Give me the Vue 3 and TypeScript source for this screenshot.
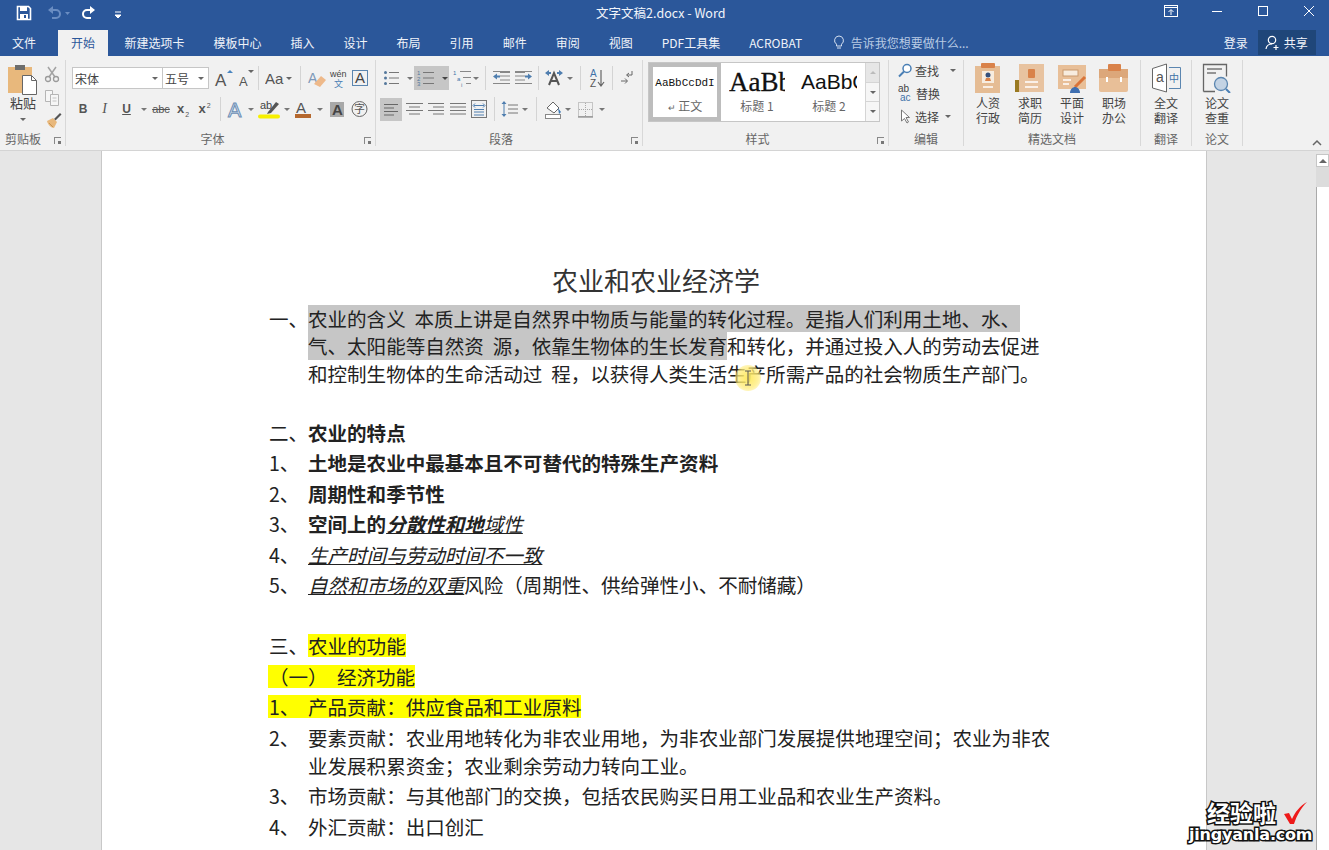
<script setup lang="ts">
interface Seg { t: string; c?: string }
interface Row { m: string; segs: Seg[][]; c?: string }

const tabs = ['新建选项卡', '模板中心', '插入', '设计', '布局', '引用', '邮件', '审阅', '视图', 'PDF工具集', 'ACROBAT']

const rows: Row[] = [
  { m: '一、', c: 'wrap first', segs: [
    [{ t: '农业的含义 本质上讲是自然界中物质与能量的转化过程。是指人们利用土地、水、', c: 'sel' }],
    [{ t: '气、太阳能等自然资 源，依靠生物体的生长发育', c: 'sel' }, { t: '和转化，并通过投入人的劳动去促进' }],
    [{ t: '和控制生物体的生命活动过 程，以获得人类生活生产所需产品的社会物质生产部门。' }],
  ] },
  { m: '二、', c: 'sec-a', segs: [[{ t: '农业的特点', c: 'b sp' }]] },
  { m: '1、', segs: [[{ t: '土地是农业中最基本且不可替代的特殊生产资料', c: 'b' }]] },
  { m: '2、', segs: [[{ t: '周期性和季节性', c: 'b' }]] },
  { m: '3、', segs: [[{ t: '空间上的', c: 'b' }, { t: '分散性和地', c: 'b i' }, { t: '域性', c: 'i' }]] },
  { m: '4、', segs: [[{ t: '生产时间与劳动时间不一致', c: 'i' }]] },
  { m: '5、', segs: [[{ t: '自然和市场的双重', c: 'i' }, { t: '风险（周期性、供给弹性小、不耐储藏）' }]] },
  { m: '三、', c: 'sec-b', segs: [[{ t: '农业的功能', c: 'hl' }]] },
  { m: '（一）', c: 'hl-row sub', segs: [[{ t: '经济功能' }]] },
  { m: '1、', c: 'hl-row', segs: [[{ t: '产品贡献：供应食品和工业原料' }]] },
  { m: '2、', c: 'wrap two', segs: [
    [{ t: '要素贡献：农业用地转化为非农业用地，为非农业部门发展提供地理空间；农业为非农' }],
    [{ t: '业发展积累资金；农业剩余劳动力转向工业。' }],
  ] },
  { m: '3、', c: 'after-two', segs: [[{ t: '市场贡献：与其他部门的交换，包括农民购买日用工业品和农业生产资料。' }]] },
  { m: '4、', c: 'last', segs: [[{ t: '外汇贡献：出口创汇' }]] },
]
</script>

<template>
  <div class="word">
    <header class="titlebar">
      <div class="qat">
        <svg width="16" height="16" class="save"><path d="M1.5 1.5h11l2 2v11h-13z" fill="none" stroke="#fff" stroke-width="1.6"/><rect x="4" y="2" width="7" height="4" fill="#fff"/><rect x="4" y="9" width="8" height="5" fill="#fff"/><rect x="8" y="10" width="2" height="3" fill="#2b579a"/></svg>
        <svg width="26" height="16" class="undo"><path d="M3 5h7a4 4 0 0 1 0 8H6" fill="none" stroke="#6a8dc2" stroke-width="2"/><path d="M7 1L2 5l5 4z" fill="#6a8dc2"/><path d="M19 7h5l-2.500 3z" fill="#6a8dc2"/></svg>
        <svg width="16" height="16" class="redo"><path d="M13 5H6a4 4 0 0 0 0 8h4" fill="none" stroke="#fff" stroke-width="2"/><path d="M9 1l5 4-5 4z" fill="#fff"/></svg>
        <svg width="8" height="8" class="custom"><path d="M1 1h6M1 4h6l-3 3z" stroke="#fff" fill="#fff" stroke-width="1"/></svg>
      </div>
      <div class="doc-name">文字文稿2.docx - Word</div>
      <div class="winbtns">
        <svg width="14" height="13"><rect x=".5" y=".5" width="13" height="11" fill="none" stroke="#fff"/><path d="M1 2.500h12M7 10V5M4.500 7L7 4.500 9.500 7" fill="none" stroke="#fff"/></svg>
        <svg width="12" height="12" class="w-min"><path d="M1 6.500h10" stroke="#fff"/></svg>
        <svg width="12" height="12" class="w-max"><rect x="1.500" y="1.500" width="9" height="9" fill="none" stroke="#fff"/></svg>
        <svg width="12" height="12" class="w-close"><path d="M1 1l10 10M11 1L1 11" stroke="#fff"/></svg>
      </div>
    </header>

    <nav class="tabbar">
      <span class="tab file">文件</span>
      <span class="tab active">开始</span>
      <span v-for="t in tabs" :key="t" class="tab">{{ t }}</span>
      <svg width="12" height="16" class="bulb"><path d="M6 1a4.500 4.500 0 0 0-2.500 8.200V11h5V9.200A4.500 4.500 0 0 0 6 1zM4 13h4" fill="none" stroke="#d5e0f0"/></svg>
      <span class="tell">告诉我您想要做什么...</span>
      <span class="login">登录</span>
      <span class="share">
        <svg width="16" height="17"><circle cx="7" cy="6" r="3.700" fill="none" stroke="#fff" stroke-width="1.200"/><path d="M1 15c.5-3.500 3-5 6-5M11 11v5M8.500 13.500h5" fill="none" stroke="#fff" stroke-width="1.200"/></svg>
        共享
      </span>
    </nav>

    <section class="ribbon">
      <div class="grp g-clip">
        <div class="clip-body">
          <div class="paste">
            <svg width="30" height="32"><rect x="0" y="3" width="24" height="26" fill="#e8b87c"/><rect x="7" y="1" width="10" height="5" fill="#6d6d6d"/><path d="M14.500 11.500h9l5 5v14h-14z" fill="#fff" stroke="#666"/><path d="M23.500 11.500v5h5" fill="none" stroke="#666"/></svg>
            <span class="paste-t">粘贴</span>
            <i class="caret"></i>
          </div>
          <div class="clip-tools">
            <svg width="16" height="17"><path d="M4 1l7 10M12 1L5 11" stroke="#a3a3a3" stroke-width="1.500" fill="none"/><circle cx="4" cy="13" r="2.500" fill="none" stroke="#9a9a9a" stroke-width="1.300"/><circle cx="12" cy="13" r="2.500" fill="none" stroke="#9a9a9a" stroke-width="1.300"/></svg>
            <svg width="16" height="17"><path d="M1.500 1.500h7v11h-7z" fill="#f6f6f6" stroke="#b5b5b5"/><path d="M6.500 5.500h8v11h-8z" fill="#f6f6f6" stroke="#b5b5b5"/><path d="M8.500 9h4M8.500 12h4" stroke="#c2c2c2"/></svg>
            <svg width="18" height="17"><path d="M10 7l6-6 1.500 1.500-6 6z" fill="#555"/><path d="M3 9l6-3 4 4-3 6c-3 0-6-3-7-7z" fill="#e8b87c"/><path d="M5 11l4 4" stroke="#c89454"/></svg>
          </div>
        </div>
        <div class="glabel">剪贴板<i class="launch"></i></div>
      </div>

      <div class="grp g-font">
        <div class="tools">
          <div class="row r1">
            <div class="combo c-font">宋体<i class="caret"></i></div>
            <div class="combo c-size">五号<i class="caret"></i></div>
            <svg width="26" height="24"><text x="5" y="20" class="ti big">A</text><path d="M17 7l3-3 3 3z" fill="#4a86c0"/></svg>
            <svg width="22" height="24"><text x="3" y="20" class="ti mid">A</text><path d="M12 4h6l-3 3z" fill="#666"/></svg>
            <i class="sep"></i>
            <svg width="28" height="24"><text x="0" y="18" class="ti aa">Aa</text><path d="M21 11h6l-3 3z" fill="#666"/></svg>
            <i class="sep s2"></i>
            <svg width="20" height="24"><text x="1" y="17" class="ti eraser">A</text><path d="M7 18l7-8 5 4-6 7z" fill="#eeb98a"/></svg>
            <svg width="23" height="24"><text x="3" y="11" class="ti wen">wén</text><text x="7" y="21" class="ti wz">文</text></svg>
            <svg width="20" height="24"><rect x="2.500" y="4.500" width="15" height="15" fill="none" stroke="#5b86b0"/><text x="5" y="17" class="ti boxa">A</text></svg>
          </div>
          <div class="row">
            <span class="fb fb-b">B</span>
            <span class="fb fb-i">I</span>
            <span class="fb fb-u">U</span>
            <i class="drop d11"></i>
            <span class="fb fb-s">abc</span>
            <span class="fb fb-x">x<sub>2</sub></span>
            <span class="fb fb-xs">x<sup>2</sup></span>
            <i class="sep s3"></i>
            <svg width="20" height="24"><text x="2" y="20" class="ti outline">A</text></svg>
            <i class="drop d10"></i>
            <svg width="26" height="24"><text x="4" y="12" class="ti ab">ab</text><path d="M12 15l8-10 3 2-8 9-4 1z" fill="#555"/><path d="M4 19.500h18" stroke="#f7f000" stroke-width="4" stroke-linecap="round"/></svg>
            <i class="drop d9"></i>
            <svg width="24" height="24"><text x="5" y="16" class="ti tcol">A</text><rect x="4" y="17" width="16" height="4" fill="#b5682e"/></svg>
            <i class="drop d10"></i>
            <svg width="24" height="24"><rect x="5" y="5" width="14" height="15" fill="#a8a8a8"/><text x="7" y="18" class="ti gra">A</text></svg>
            <svg width="21" height="24"><circle cx="10.500" cy="12" r="7.500" fill="none" stroke="#666"/><text x="5" y="16" class="ti zi">字</text></svg>
          </div>
        </div>
        <div class="glabel shifted">字体<i class="launch"></i></div>
      </div>

      <div class="grp g-para">
        <div class="tools">
          <div class="row r1">
            <svg width="26" height="24"><path d="M9 6.500h10M9 12h10M9 17.500h10" stroke="#777"/><circle cx="5.500" cy="6.500" r="1.500" fill="#55789c"/><circle cx="5.500" cy="12" r="1.500" fill="#55789c"/><circle cx="5.500" cy="17.500" r="1.500" fill="#55789c"/></svg>
            <i class="drop d8"></i>
            <div class="on-num">
              <svg width="26" height="24"><path d="M9 6.500h11M9 12h11M9 17.500h11" stroke="#777"/><text x="3" y="9" class="ti n">1</text><text x="3" y="14.500" class="ti n">2</text><text x="3" y="20" class="ti n">3</text></svg>
              <i class="drop d9 dark"></i>
            </div>
            <svg width="29" height="24" class="m2"><path d="M9 5.500h11M12 11.500h8M15 17.500h5" stroke="#888"/><text x="2" y="9" class="ti n b1">1</text><text x="6" y="15" class="ti n b1">a</text><text x="10" y="21" class="ti n">i</text><path d="M22 11h6l-3 3z" fill="#777"/></svg>
            <i class="sep s4"></i>
            <svg width="22" height="24"><path d="M9 6.500h10M9 10h10M9 14h10M2 17.500h17M2 5.500h17" stroke="#888"/><path d="M2 10.500l4-3v2h3v2H6v2z" fill="#4f7eaf"/></svg>
            <svg width="22" height="24"><path d="M2 6.500h10M2 10h10M2 14h10M2 17.500h17M2 5.500h17" stroke="#888"/><path d="M19 10.500l-4-3v2h-3v2h3v2z" fill="#4f7eaf"/></svg>
            <i class="sep s5"></i>
            <svg width="22" height="24"><path d="M6 19l5-12 5 12M8 15h6" fill="none" stroke="#555" stroke-width="2"/><path d="M2 7l4-3v2h2v2H6v2zM20 7l-4-3v2h-2v2h2v2z" fill="#4f7eaf"/></svg>
            <i class="drop d9"></i>
            <i class="sep s6"></i>
            <svg width="20" height="24"><text x="2" y="11" class="ti az b1">A</text><text x="2" y="21" class="ti az">Z</text><path d="M13 4v15M10 16l3 4 3-4" fill="none" stroke="#666" stroke-width="1.200"/></svg>
            <i class="sep s7"></i>
            <svg width="14" height="24"><path d="M12 5v4H7M9 7L6.500 9 9 11M1 15h6M5 12.500L7.500 15 5 17.500" fill="none" stroke="#666"/></svg>
          </div>
          <div class="row">
            <div class="on-align"><svg width="22" height="23"><path d="M4 6.500h14M4 10h10M4 13.500h14M4 17h10" stroke="#666"/></svg></div>
            <svg width="24" height="24"><path d="M4 6.500h17M7 10h11M4 13.500h17M7 17h11" stroke="#777"/></svg>
            <svg width="22" height="24"><path d="M2 6.500h16M7 10h11M2 13.500h16M7 17h11" stroke="#777"/></svg>
            <svg width="20" height="24"><path d="M2 6.500h16M2 10h16M2 13.500h16M2 17h16" stroke="#777"/></svg>
            <svg width="22" height="24"><rect x="3.500" y="3.500" width="15" height="17" fill="none" stroke="#777"/><path d="M6 8.500h10M7 6.500l-2 2 2 2M15 6.500l2 2-2 2M6 12.500h10M6 15h10M6 18h10" fill="none" stroke="#4f7eaf"/></svg>
            <i class="sep s8"></i>
            <svg width="20" height="24"><path d="M8 8h10M8 12h10M8 16h10" stroke="#777"/><path d="M4 5v14" stroke="#4f7eaf"/><path d="M1.500 7L4 4l2.500 3zM1.500 17L4 20l2.500-3z" fill="#4f7eaf"/></svg>
            <i class="drop d9"></i>
            <i class="sep s9"></i>
            <svg width="20" height="24"><path d="M4 11l6-6 6 6-5 5z" fill="#fff" stroke="#666"/><path d="M15 11l3 4-2 2z" fill="#3d78b5"/><rect x="2.500" y="17.500" width="15" height="4" fill="#fff" stroke="#888"/></svg>
            <i class="drop d10"></i>
            <svg width="22" height="24"><rect x="5.500" y="5.500" width="14" height="14" fill="none" stroke="#999" stroke-dasharray="1 1"/><path d="M5 20h15" stroke="#777"/><path d="M12.500 6v13M6 12.500h13" stroke="#aaa" stroke-dasharray="1 1"/></svg>
            <i class="drop d14"></i>
          </div>
        </div>
        <div class="glabel shifted">段落<i class="launch"></i></div>
      </div>

      <div class="grp g-style">
        <div class="gallery">
          <div class="sty s-on"><span class="spv pv1">AaBbCcDdI</span><span class="stl"><span class="ret">↵</span> 正文</span></div>
          <div class="sty s-h1"><span class="spv pv2">AaBb</span><span class="stl">标题 1</span></div>
          <div class="sty s-h2"><span class="spv pv3">AaBbC</span><span class="stl">标题 2</span></div>
          <div class="scr">
            <span class="up"></span>
            <span class="dn"></span>
            <span class="more"></span>
          </div>
        </div>
        <div class="glabel shifted">样式<i class="launch"></i></div>
      </div>

      <div class="grp g-edit">
        <div class="edit-list">
          <div class="eitem">
            <svg width="14" height="15"><circle cx="9" cy="5.500" r="4" fill="#fff" stroke="#4a7fb5" stroke-width="1.500"/><path d="M6 8.500L1 13.500" stroke="#4a7fb5" stroke-width="2"/></svg>
            查找<i class="caret far"></i>
          </div>
          <div class="eitem">
            <svg width="15" height="19"><text x="0" y="8" class="ti abc">ab</text><text x="2" y="17" class="ti abc blue">ac</text></svg>
            替换
          </div>
          <div class="eitem">
            <svg width="14" height="15"><path d="M3.500 1v11l3-2.500 2.500 4.500 1.500-1-2.500-4.500h3.500z" fill="#fff" stroke="#777"/></svg>
            选择<i class="caret"></i>
          </div>
        </div>
        <div class="glabel">编辑</div>
      </div>

      <div class="grp g-pick">
        <div class="cols">
          <div class="bigbtn">
            <svg width="30" height="30"><rect x="2" y="3" width="25" height="27" fill="#e5bc94"/><rect x="8" y="0" width="14" height="5" rx="1" fill="#d9824a"/><rect x="9" y="8" width="12" height="12" fill="#f7ecdf"/><circle cx="15" cy="12" r="2.500" fill="#35507c"/><path d="M12 18h6l-1-3h-4z" fill="#d9824a"/><path d="M10 24h10" stroke="#fff" stroke-width="1.500"/></svg>
            <span>人资<br>行政</span>
          </div>
          <div class="bigbtn">
            <svg width="30" height="30"><rect x="4" y="1" width="25" height="28" fill="#e8c3a0"/><rect x="0" y="17" width="4" height="12" fill="#9a7a22"/><rect x="13" y="6" width="7" height="9" rx="1" fill="#d9824a"/><path d="M10 19h13M10 24h13" stroke="#fff" stroke-width="1.500"/></svg>
            <span>求职<br>简历</span>
          </div>
          <div class="bigbtn">
            <svg width="30" height="30"><rect x="1" y="2" width="28" height="24" fill="#e8bf98"/><rect x="6" y="7" width="15" height="6" fill="#f7ecdf" stroke="#c99a6e"/><path d="M6 17h8M6 21h6" stroke="#fff" stroke-width="1.500"/><path d="M18 24l10-10" stroke="#d9743a" stroke-width="3"/><path d="M13 30c0-4 3-6 5-6s5 2 5 6z" fill="#3f6fb0"/></svg>
            <span>平面<br>设计</span>
          </div>
          <div class="bigbtn">
            <svg width="30" height="30"><rect x="0" y="6" width="29" height="23" rx="2" fill="#e8bf98"/><path d="M0 6h29v9H0z" fill="#dca77a"/><rect x="9" y="1" width="13" height="7" rx="1" fill="#d9824a"/><rect x="7" y="14" width="2" height="5" fill="#fff"/><rect x="21" y="14" width="2" height="5" fill="#fff"/></svg>
            <span>职场<br>办公</span>
          </div>
        </div>
        <div class="glabel">精选文档</div>
      </div>

      <div class="grp g-tr">
        <div class="cols">
          <div class="bigbtn wide">
            <svg width="30" height="30"><path d="M1.500 5.500L15.500 1v28L1.500 25z" fill="#fff" stroke="#666"/><path d="M18 4.500h11.500v21H18" fill="none" stroke="#5b86b0"/><text x="5" y="19" class="ti a-t">a</text><text x="18" y="19" class="ti z-t">中</text></svg>
            <span>全文<br>翻译</span>
          </div>
        </div>
        <div class="glabel">翻译</div>
      </div>

      <div class="grp g-lw">
        <div class="cols">
          <div class="bigbtn wide">
            <svg width="30" height="30"><path d="M1.500 28.500V1.500h23v12M13 28.500H1.500" fill="none" stroke="#666" stroke-width="1.300"/><path d="M5 6h15M5 10h9" stroke="#777" stroke-width="1.300"/><circle cx="19" cy="21" r="6.500" fill="#c3d3e4" stroke="#5b86b0" stroke-width="1.300"/><path d="M24 26l4 4" stroke="#4a7fb5" stroke-width="2"/></svg>
            <span>论文<br>查重</span>
          </div>
        </div>
        <div class="glabel">论文</div>
      </div>

      <svg width="10" height="7" class="collapse"><path d="M1 6l4-4 4 4" fill="none" stroke="#666" stroke-width="1.500"/></svg>
    </section>

    <main class="docarea">
      <article class="page">
        <h1 class="title">农业和农业经济学</h1>
        <div v-for="(r, i) in rows" :key="i" class="item" :class="r.c">
          <span class="mk">{{ r.m }}</span>
          <div class="body">
            <div v-for="(line, j) in r.segs" :key="j" class="ln">
              <span v-for="(s, k) in line" :key="k" :class="s.c">{{ s.t }}</span>
            </div>
          </div>
        </div>
      </article>
      <aside class="vscroll">
        <div class="sb-up"></div>
        <div class="sb-track"></div>
        <div class="sb-thumb"></div>
      </aside>
    </main>

    <div class="pointer">
      <svg width="8" height="16"><path d="M1 1h6M1 15h6M4 1v14" stroke="#555" fill="none"/></svg>
    </div>

    <div class="mark">
      <div class="mark-top">
        <span>经验啦</span>
        <svg width="26" height="24"><path d="M2 13l5-1 3 6C13 11 18 5 25 1c-6 6-10 13-13 22H8z" fill="#ee1a1a"/></svg>
      </div>
      <div class="mark-url">jingyanla.com</div>
    </div>
  </div>
</template>

<style scoped>
.word {
  position: relative;
  width: 1329px;
  height: 850px;
  overflow: hidden;
  display: flex;
  flex-direction: column;
  font-family: "Noto Sans CJK SC", "Liberation Sans", sans-serif;
  background: #e6e6e6;
}
svg { display: block; flex: none; overflow: hidden; }
.ti { font-family: "Liberation Sans", sans-serif; fill: #555; }

/* 标题栏 */
.titlebar {
  height: 30px;
  flex: none;
  display: flex;
  align-items: center;
  background: #2b579a;
  color: #fff;
}
.qat { width: 596px; flex: none; display: flex; align-items: center; }
.save { margin: 0 0 4px 16px; }
.undo { margin: 0 0 4px 14px; }
.redo { margin: 0 0 4px 9px; }
.custom { margin-left: 17px; }
.doc-name { font-size: 12.500px; color: #f2f5fa; margin-top: -5px; }
.winbtns { flex: 1; display: flex; justify-content: flex-end; align-items: center; padding: 0 14px 8px 0; }
.w-min { margin-left: 33px; }
.w-max { margin-left: 34px; }
.w-close { margin-left: 34px; }

.tabbar {
  height: 26px;
  flex: none;
  display: flex;
  align-items: stretch;
  background: #2b579a;
  color: #f0f3f9;
  font-size: 12px;
}
.tab { padding: 0 14.500px; line-height: 25px; }
.tab.file { padding: 0 12px; margin-right: 10px; }
.tab.active { padding: 0 13px; background: #f1f1f1; color: #2b579a; margin-right: 2px; }
.bulb { margin: 5px 0 0 16px; }
.tell { margin-left: 6px; line-height: 26px; color: #b9cbe4; font-size: 12px; width: 373px; }
.login { line-height: 25px; width: 34px; }
.share {
  width: 58px;
  height: 25px;
  background: #1f4679;
  display: flex;
  align-items: center;
  gap: 3px;
  padding-left: 7px;
  box-sizing: border-box;
}

/* 功能区 */
.ribbon {
  position: relative;
  height: 95px;
  flex: none;
  box-sizing: border-box;
  padding-top: 4px;
  display: flex;
  align-items: flex-start;
  background: #f1f1f1;
  border-bottom: 1px solid #d4d4d4;
  color: #444;
  font-size: 12px;
}
.grp {
  position: relative;
  height: 86px;
  flex: none;
  box-sizing: border-box;
  border-right: 1px solid #d8d8d8;
}
.g-clip { width: 66px; }
.g-font { width: 310px; }
.g-para { width: 267px; }
.g-style { width: 246px; }
.g-edit { width: 75px; }
.g-pick { width: 177px; }
.g-tr, .g-lw { width: 51px; }
.glabel {
  position: absolute;
  left: 0;
  right: 0;
  bottom: 0;
  height: 15px;
  line-height: 15px;
  text-align: center;
  font-size: 12px;
  color: #666;
}
.glabel.shifted { padding-right: 16px; }
.g-clip .glabel { text-align: left; padding-left: 5px; }
.launch {
  position: absolute;
  right: 4px;
  bottom: 2px;
  width: 6px;
  height: 6px;
  border-left: 1px solid #888;
  border-top: 1px solid #888;
}
.launch::after {
  content: "";
  position: absolute;
  right: 0;
  bottom: 0;
  width: 3px;
  height: 3px;
  background: #777;
}
.caret {
  display: inline-block;
  width: 0;
  height: 0;
  border: 3px solid transparent;
  border-top: 3px solid #666;
  border-bottom: 0;
}
.clip-body { display: flex; padding: 4px 0 0 8px; }
.paste { width: 30px; display: flex; flex-direction: column; align-items: center; }
.paste svg { align-self: flex-start; }
.paste-t { font-size: 13px; line-height: 18px; color: #444; margin-top: -2px; }
.paste .caret { margin-top: 6px; }
.clip-tools { margin-left: 6px; display: flex; flex-direction: column; gap: 6px; padding-top: 2px; }

.tools { padding: 6px 0 0 0; }
.row { display: flex; align-items: center; height: 24px; margin-bottom: 7px; }
.g-font .row { padding-left: 6px; }
.g-para .row { padding-left: 4px; }
.combo {
  height: 22px;
  box-sizing: border-box;
  background: #fff;
  border: 1px solid #c6c6c6;
  display: flex;
  align-items: center;
  justify-content: space-between;
  padding: 0 4px 0 2px;
  font-size: 12px;
  color: #444;
}
.c-font { width: 91px; }
.c-size { width: 47px; margin-left: -1px; margin-right: 1px; }
.sep { flex: none; width: 1px; height: 24px; background: #d4d4d4; margin: 0 6px 0 0; }
.s2 { margin: 0 6px 0 7px; }
.s3 { margin: 0 5px 0 4px; }
.s4 { margin: 0 5px; }
.s5 { margin: 0 4px 0 3px; }
.s6 { margin: 0 7px 0 6px; }
.s7 { margin: 0 7px 0 4px; }
.s8 { margin: 0 5px 0 4px; }
.s9 { margin: 0 6px 0 7px; }
.drop { flex: none; height: 24px; display: flex; align-items: center; justify-content: center; }
.drop::after {
  content: "";
  border: 3px solid transparent;
  border-top: 3px solid #777;
  border-bottom: 0;
}
.drop.dark::after { border-top-color: #444; }
.d8 { width: 8px; }
.d9 { width: 9px; }
.d10 { width: 10px; }
.d11 { width: 11px; }
.d14 { width: 14px; }
.fb {
  flex: none;
  text-align: center;
  height: 24px;
  font: 700 12px/24px "Liberation Sans", sans-serif;
  color: #555;
}
.fb sub, .fb sup { font-size: 7px; font-weight: 400; line-height: 0; margin-left: 1px; }
.fb-b { width: 22px; }
.fb-i { width: 21px; font-style: italic; font-weight: 400; font-family: "Liberation Serif", serif; font-size: 14px; }
.fb-u { width: 23px; text-decoration: underline; }
.fb-s { width: 24px; font-weight: 400; font-size: 11px; text-decoration: line-through; }
.fb-x { width: 20px; font-size: 13px; }
.fb-xs { width: 23px; font-size: 13px; }
.big { font-size: 17px; }
.mid { font-size: 13px; }
.aa { font-size: 15px; }
.eraser { font-size: 14px; fill: #7d98b8; }
.wen { font-size: 9px; fill: #444; }
.wz { font-size: 9px; fill: #4a7fb5; font-family: "Noto Sans CJK SC", sans-serif; }
.boxa { font-size: 15px; fill: #444; }
.ab { font-size: 11px; fill: #444; }
.outline { font-size: 20px; fill: #dbe6f2; stroke: #6d8fb5; stroke-width: 1; }
.tcol { font-size: 15px; fill: #555; }
.gra { font-size: 15px; fill: #444; font-weight: 700; }
.zi { font-size: 11px; fill: #555; font-family: "Noto Sans CJK SC", sans-serif; }
.n { font-size: 6px; fill: #55789c; }
.b1 { fill: #3f72a8; }
.az { font-size: 10px; }
.on-num { display: flex; width: 35px; height: 24px; background: #c6c6c6; }
.m2 { margin-left: 2px; }
.on-align { width: 22px; height: 23px; background: #c6c6c6; }

/* 样式库 */
.gallery {
  position: absolute;
  left: 5px;
  top: 2px;
  width: 232px;
  height: 60px;
  box-sizing: border-box;
  display: flex;
  background: #fff;
  border: 1px solid #c6c6c6;
}
.sty {
  width: 72px;
  flex: none;
  box-sizing: border-box;
  overflow: hidden;
  display: flex;
  flex-direction: column;
  align-items: center;
  white-space: nowrap;
}
.s-on { border: 4px solid #bdbdbd; padding-top: 1px; }
.s-h1, .s-h2 { padding: 0 8px; }
.spv { display: block; height: 34px; width: 100%; overflow: hidden; color: #111; }
.pv1 { font: 11px/30px "Liberation Mono", monospace; height: 32px; text-align: center; }
.pv2 { font: 27px/38px "Liberation Serif", serif; -webkit-text-stroke: .3px #111; }
.pv3 { font: 21px/38px "Liberation Sans", sans-serif; }
.stl { font-size: 12px; line-height: 18px; color: #666; }
.ret { font-size: 9px; }
.scr {
  flex: 1;
  border-left: 1px solid #d5d5d5;
  display: flex;
  flex-direction: column;
  background: #f6f6f6;
}
.scr span { flex: 1; display: flex; align-items: center; justify-content: center; border-bottom: 1px solid #d5d5d5; }
.scr span:last-child { border-bottom: 0; }
.scr .up { background: #e6e6e6; }
.scr span::after { content: ""; border: 3px solid transparent; border-top: 3px solid #666; border-bottom: 0; }
.scr .up::after { border-top: 0; border-bottom: 3px solid #bbb; }
.scr .more::after { box-shadow: 0 -3px 0 -2px #666; }

/* 编辑 */
.edit-list { display: flex; flex-direction: column; gap: 2px; padding-left: 9px; }
.eitem { display: flex; align-items: center; height: 21px; gap: 3px; font-size: 12px; color: #444; }
.eitem .caret { margin-left: 3px; }
.eitem .far { margin-left: 8px; }
.abc { font-size: 10px; fill: #444; }
.blue { fill: #3f72a8; }

/* 大按钮 */
.cols { display: flex; padding-top: 3px; }
.bigbtn {
  width: 42px;
  display: flex;
  flex-direction: column;
  align-items: center;
  font-size: 12px;
  line-height: 15px;
  color: #444;
}
.bigbtn span { margin-top: 2px; text-align: center; }
.bigbtn.wide { width: 50px; }
.g-pick .cols { padding-left: 3px; }
.a-t { font-size: 14px; }
.z-t { font-size: 10px; fill: #3f72a8; font-family: "Noto Sans CJK SC", sans-serif; }
.collapse { position: absolute; left: 1312px; top: 83px; }

/* 文档区 */
.docarea {
  flex: 1;
  min-height: 0;
  display: flex;
  justify-content: flex-start;
  background: #e6e6e6;
}
.page {
  width: 1106px;
  margin-left: 101px;
  box-sizing: border-box;
  background: #fff;
  border-left: 1px solid #c8c8c8;
  border-right: 1px solid #c8c8c8;
  padding: 112px 163px 0 167px;
  color: #222;
  overflow: hidden;
}
.title {
  margin: 0;
  font-size: 26px;
  font-weight: 400;
  line-height: 34px;
  text-align: center;
  color: #333;
}
.item {
  display: flex;
  font-size: 19.550px;
  line-height: 23px;
  margin-top: 7.500px;
  white-space: pre;
  word-spacing: 4.500px;
}
.mk { width: 39px; flex: none; }
.ln span { display: inline-block; }
.b { font-weight: 700; }
.i { font-style: italic; text-decoration: underline; }
.sel { background: #c6c6c6; }
.hl { background: #ffff00; }
.wrap .ln { line-height: 27.500px; }
.first { margin-top: 7.500px; line-height: 27.500px; }
.sec-a { margin-top: 33.500px; }
.sec-b { margin-top: 38px; }
.hl-row { background: #ffff00; width: fit-content; margin-left: -1px; padding-left: 1px; }
.sub .mk { width: 68px; }
.two { margin-top: 5.500px; line-height: 28px; }
.two .ln { line-height: 28px; }
.after-two { margin-top: 4.500px; }
.last { margin-top: 8px; }

.vscroll {
  position: absolute;
  left: 1316px;
  top: 154px;
  bottom: 0;
  width: 13px;
  display: flex;
  flex-direction: column;
  background: #dcdcdc;
}
.sb-up {
  height: 13px;
  box-sizing: border-box;
  background: #fff;
  border: 1px solid #c6c6c6;
  display: flex;
  align-items: center;
  justify-content: center;
}
.sb-up::after { content: ""; border: 4px solid transparent; border-bottom: 4px solid #666; border-top: 0; }
.sb-track { height: 20px; }
.sb-thumb { flex: 1; background: #fff; border-left: 1px solid #aaa; }

.pointer {
  position: absolute;
  left: 735px;
  top: 365px;
  width: 26px;
  height: 26px;
  display: flex;
  align-items: center;
  justify-content: center;
  border-radius: 50%;
  background: radial-gradient(circle, rgba(255, 232, 90, .95) 0%, rgba(255, 236, 120, .75) 55%, rgba(255, 240, 150, 0) 100%);
}

.mark {
  position: absolute;
  left: 1189px;
  top: 800px;
  width: 130px;
  color: #fff;
}
.mark-top {
  display: flex;
  align-items: center;
  gap: 6px;
  padding-left: 18px;
  height: 25px;
  font-size: 23px;
  font-weight: 700;
  line-height: 25px;
  -webkit-text-stroke: 3px #111;
  paint-order: stroke fill;
}
.mark-url {
  font: 700 16px/19px "DejaVu Sans", sans-serif;
  letter-spacing: -.2px;
  -webkit-text-stroke: 3px #111;
  paint-order: stroke fill;
}
</style>

<style>
html, body { margin: 0; background: #e6e6e6; overflow: hidden; }
</style>
